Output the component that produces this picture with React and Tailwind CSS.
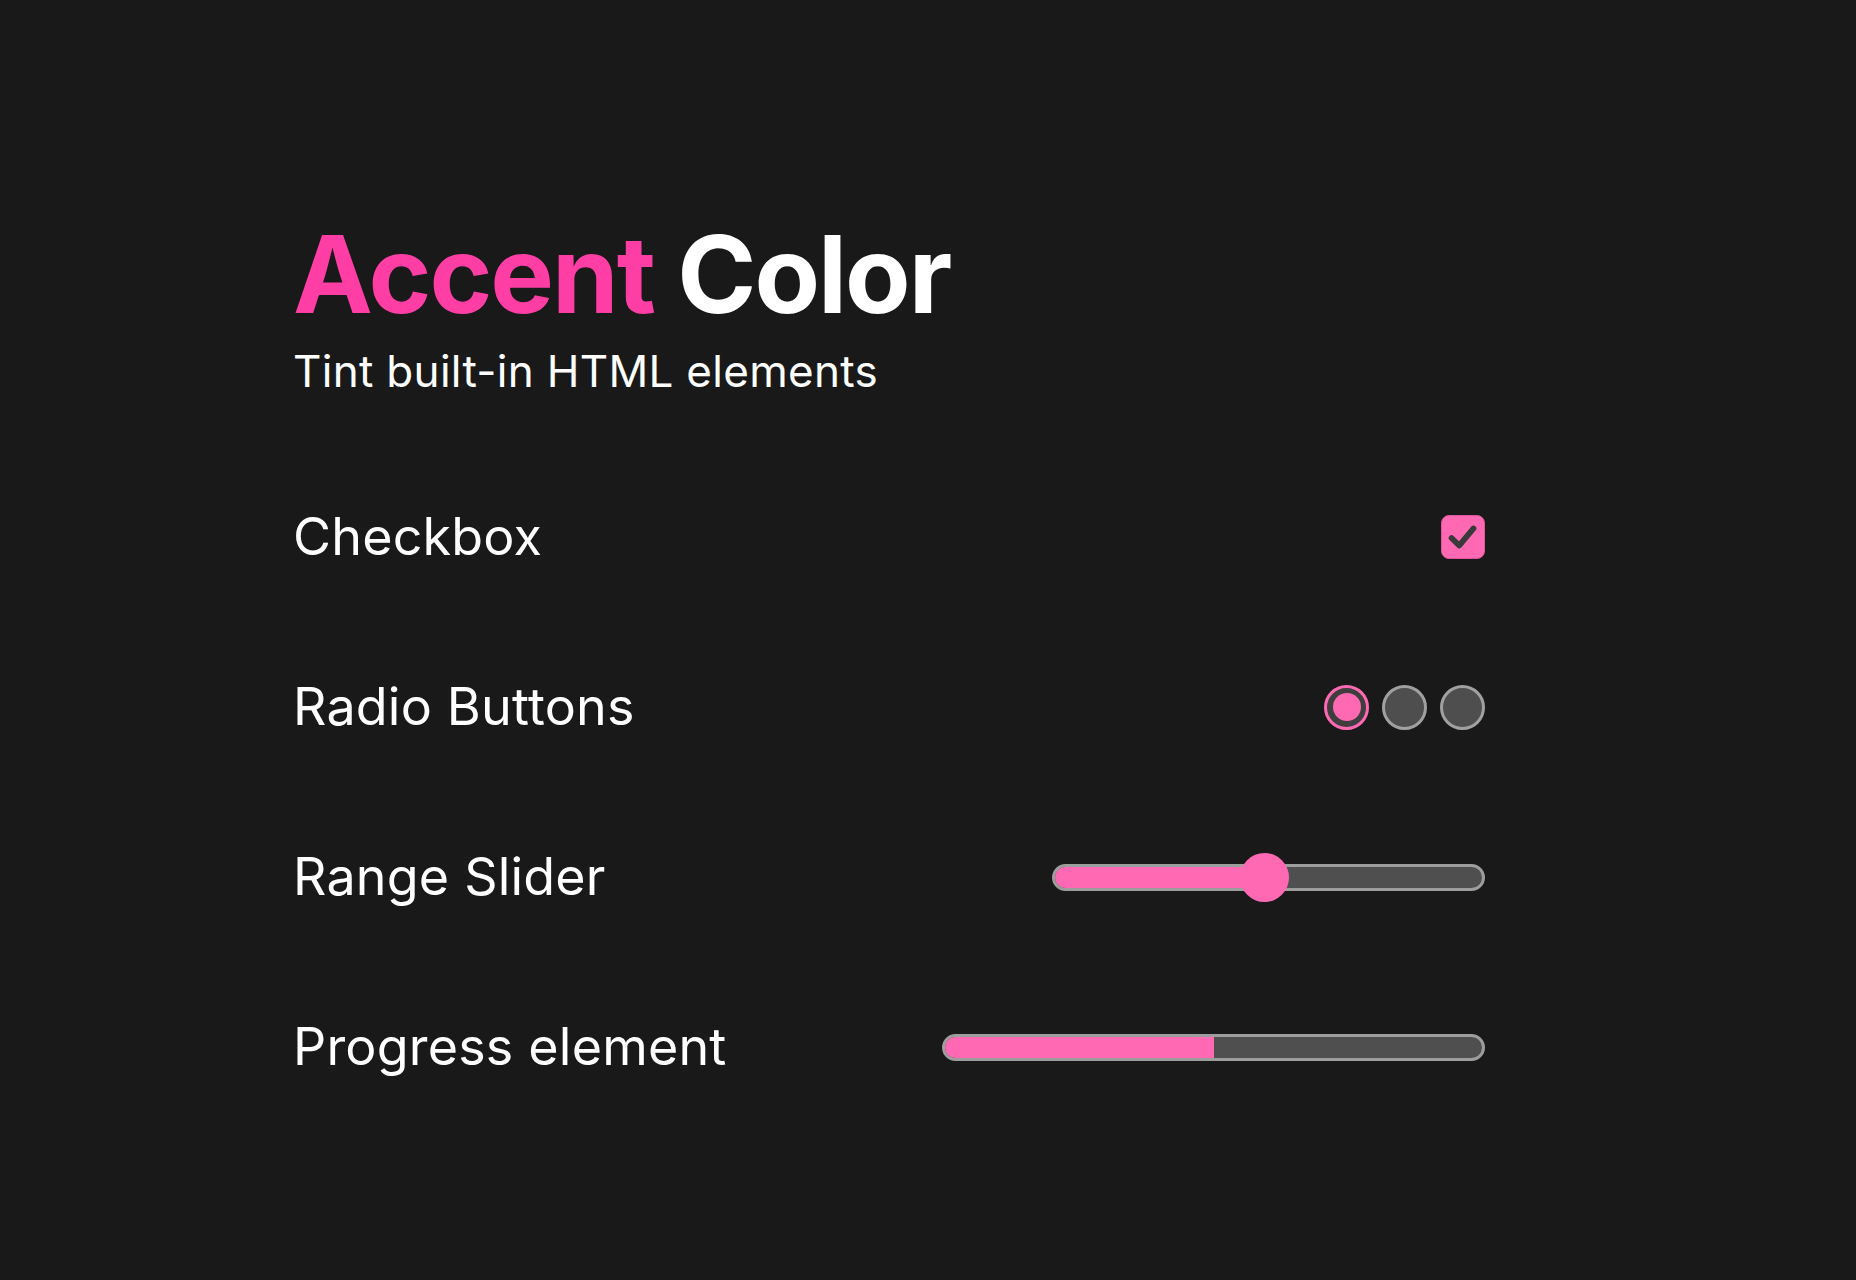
import React from "react";

function Checkbox() {
  return (
    <div className="w-[44px] h-[44px] rounded-[8px] bg-[#ff69b4] border border-[#e0569c] flex items-center justify-center">
      <svg width="44" height="44" viewBox="0 0 44 44" fill="none">
        <path d="M10 23 L18 31 L33 13" stroke="#3a3a3a" strokeWidth="6" strokeLinecap="round" strokeLinejoin="round" />
      </svg>
    </div>
  );
}

function Radio({ checked }) {
  if (checked) {
    return (
      <div className="w-[45px] h-[45px] rounded-full border-[3px] border-[#ff69b4] bg-[#3e3e3e] flex items-center justify-center">
        <div className="w-[28px] h-[28px] rounded-full bg-[#ff69b4]" />
      </div>
    );
  }
  return <div className="w-[45px] h-[45px] rounded-full border-[3px] border-[#a0a0a0] bg-[#4e4e4e]" />;
}

function Slider({ value }) {
  const frac = value / 100;
  return (
    <div className="relative w-[433px] h-[49px] flex items-center">
      <div className="w-full h-[27px] rounded-full border-[3px] border-[#9d9d9d] bg-[#4f4f4f] overflow-hidden">
        <div className="h-full bg-[#ff69b4]" style={{ width: `calc((100% - 57px) * ${frac} + 24px)` }} />
      </div>
      <div
        className="absolute top-0 w-[49px] h-[49px] rounded-full bg-[#ff69b4]"
        style={{ left: `calc((100% - 57px) * ${frac})` }}
      />
    </div>
  );
}

function Progress({ value }) {
  return (
    <div className="w-[543px] h-[27px] rounded-full border-[3px] border-[#9d9d9d] bg-[#4f4f4f] overflow-hidden">
      <div className="h-full bg-[#ff69b4]" style={{ width: `${value}%` }} />
    </div>
  );
}

function Row({ label, children }) {
  return (
    <div className="h-[170px] flex items-center justify-between">
      <span className="text-[52px] leading-none text-white tracking-[0.2px]">{label}</span>
      {children}
    </div>
  );
}

export default function App() {
  return (
    <div
      className="min-h-screen w-full bg-[#19191a] text-white pl-[293px] pt-[221px]"
      style={{ fontFamily: "Inter, 'Noto Sans', sans-serif" }}
    >
      <div className="w-[1192px]">
        <h1 className="text-[107px] leading-none font-bold tracking-[-2px]">
          <span className="text-[#ff3ea5]">Accent</span> <span className="text-white">Color</span>
        </h1>
        <p className="mt-[21px] text-[44px] leading-none text-white tracking-[0.3px]">Tint built-in HTML elements</p>
        <div className="mt-[59px]">
          <Row label="Checkbox">
            <Checkbox />
          </Row>
          <Row label="Radio Buttons">
            <div className="flex gap-[13px]">
              <Radio checked />
              <Radio />
              <Radio />
            </div>
          </Row>
          <Row label="Range Slider">
            <Slider value={50} />
          </Row>
          <Row label="Progress element">
            <Progress value={50} />
          </Row>
        </div>
      </div>
    </div>
  );
}
